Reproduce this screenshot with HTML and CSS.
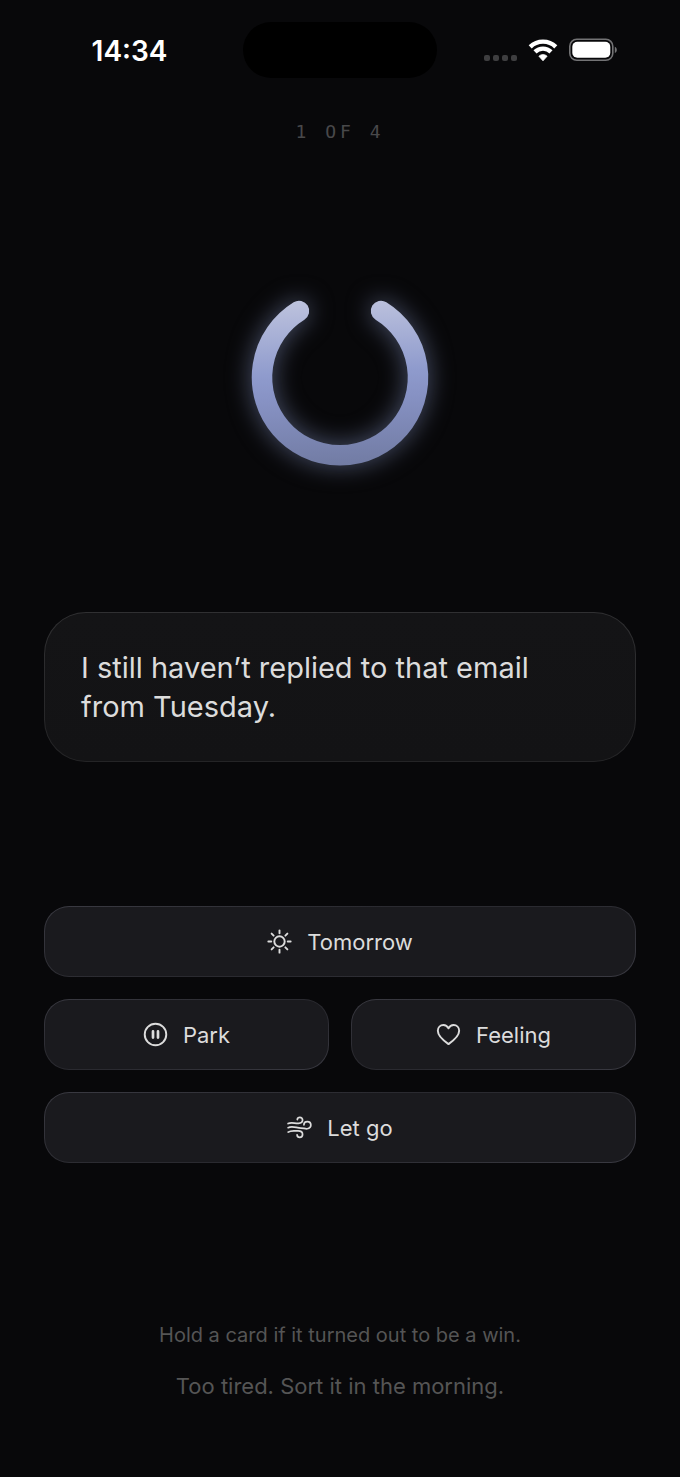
FILE: index.html
```html
<!DOCTYPE html>
<html lang="en">
<head>
  <meta charset="UTF-8">
  <meta name="viewport" content="width=device-width, initial-scale=1.0">
  <title>Sort</title>
  <link rel="stylesheet" href="styles.css">
</head>
<body>
  <header class="status">
    <time class="status-time">14:34</time>
    <div class="island"></div>
    <div class="status-icons">
      <div class="signal"><i></i><i></i><i></i><i></i></div>
      <svg class="wifi" width="30" height="24" viewBox="0 0 30 24">
        <g fill="none" stroke="#fff" stroke-width="4.400">
          <path d="M2.200 8.800A18.500 18.500 0 0 1 27.800 8.800"/>
          <path d="M7 13.900A11.500 11.500 0 0 1 23 13.900"/>
        </g>
        <path d="M15 22.800L10.900 18.200A6 6 0 0 1 19.100 18.200Z" fill="#fff" stroke="#fff" stroke-width="0.800" stroke-linejoin="round"/>
      </svg>
      <svg class="battery" width="48" height="24" viewBox="0 0 48 24">
        <rect x="0.800" y="1.300" width="43" height="21" rx="7" fill="none" stroke="#737375" stroke-width="1.600"/>
        <rect x="3.300" y="3.800" width="38" height="16" rx="5" fill="#fff"/>
        <path d="M45.800 8.800C48.500 9.800 48.500 14 45.800 15Z" fill="#737375"/>
      </svg>
    </div>
  </header>

  <main class="screen">
    <p class="counter">1 OF 4</p>

    <svg class="ring" viewBox="0 0 180 180">
      <defs>
        <linearGradient id="ringFill" gradientUnits="userSpaceOnUse" x1="76" y1="10" x2="84" y2="178">
          <stop offset="0" stop-color="#bfc4de"/>
          <stop offset="0.450" stop-color="#8f9bcd"/>
          <stop offset="0.600" stop-color="#8792c4"/>
          <stop offset="1" stop-color="#727ca4"/>
        </linearGradient>
      </defs>
      <path d="M49 24A78 78 0 1 0 131 24" fill="none" stroke="url(#ringFill)" stroke-width="20.500" stroke-linecap="round"/>
    </svg>

    <article class="card">
      <p>I still haven’t replied to that email from Tuesday.</p>
    </article>

    <div class="actions">
      <button class="action wide" type="button">
        <svg class="icon" viewBox="0 0 26 26">
          <circle cx="13" cy="13" r="5.400"/>
          <path d="M13 1.400V4.400M13 21.600V24.600M1.400 13H4.400M21.600 13H24.600M4.800 4.800L6.900 6.900M19.100 19.100L21.200 21.200M4.800 21.200L6.900 19.100M19.100 6.900L21.200 4.800"/>
        </svg>
        Tomorrow
      </button>
      <button class="action" type="button">
        <svg class="icon" viewBox="0 0 26 26">
          <circle cx="13" cy="13" r="11.200"/>
          <path d="M10.400 9.800V16.200M15.600 9.800V16.200" stroke-width="2.800"/>
        </svg>
        Park
      </button>
      <button class="action" type="button">
        <svg class="icon" viewBox="0 0 26 26">
          <path d="M13 23C7.200 19 1.900 14.500 1.900 9.200C1.900 5.700 4.500 3.200 7.700 3.200C10.100 3.200 11.900 4.500 13 6.600C14.100 4.500 15.900 3.200 18.300 3.200C21.500 3.200 24.100 5.700 24.100 9.200C24.100 14.500 18.800 19 13 23Z"/>
        </svg>
        Feeling
      </button>
      <button class="action wide" type="button">
        <svg class="icon" viewBox="0 0 26 26">
          <g stroke-width="1.800">
            <path d="M1.200 8.900C4.500 7.200 8 8.900 12 8.700C14.600 8.600 16.200 7.200 16.200 5.300C16.200 3.600 15 2.500 13.400 2.500C12 2.500 10.900 3.300 10.700 4.700"/>
            <path d="M1.200 13.200C5.500 11 10 13.600 14.500 13.600C17 13.600 19 14.500 21 14.300C23.300 14 24.800 12.500 24.800 10.500C24.800 8.300 23.200 6.800 21.100 6.800C19 6.800 17.600 8.200 17.600 10.200"/>
            <path d="M1.200 17.800C4.500 15.500 8 16.600 11.500 16.600C14.500 16.700 16.200 18 16.200 20C16.200 22 15 23.200 13.200 23.200C11.700 23.200 10.600 22.200 10.500 20.700"/>
          </g>
        </svg>
        Let go
      </button>
    </div>

    <footer class="footer">
      <p class="hint">Hold a card if it turned out to be a win.</p>
      <button class="skip" type="button">Too tired. Sort it in the morning.</button>
    </footer>
  </main>
</body>
</html>
```

FILE: styles.css
```css
* {
  box-sizing: border-box;
  margin: 0;
  padding: 0;
}
body {
  min-height: 100vh;
  display: flex;
  flex-direction: column;
  background-color: #08080a;
  color: #dcdcdc;
  font-family: 'Inter', sans-serif;
}

/* status bar */
.status {
  display: grid;
  grid-template-columns: 1fr auto 1fr;
  align-items: center;
  padding-top: 22px;
}
.status-time {
  justify-self: center;
  padding-top: 2px;
  padding-left: 16px;
  color: #fff;
  font-size: 28px;
  font-weight: 600;
}
.island {
  width: 194px;
  height: 56px;
  border-radius: 28px;
  background-color: #000;
}
.status-icons {
  display: flex;
  justify-content: flex-end;
  align-items: center;
  gap: 11px;
  padding-right: 63px;
}
.signal {
  display: flex;
  gap: 3px;
  padding-top: 15px;
}
.signal i {
  width: 6px;
  height: 6px;
  border-radius: 2px;
  background-color: #3e3e40;
}

.screen {
  flex: 1;
  display: flex;
  flex-direction: column;
  padding: 42px 44px 75px;
}
.counter {
  text-align: center;
  color: #48484a;
  font-family: 'DejaVu Sans Mono', monospace;
  font-size: 18px;
  line-height: 24px;
  letter-spacing: 4px;
}

.ring {
  align-self: center;
  width: 180px;
  margin-top: 143px;
  overflow: visible;
  filter: drop-shadow(0 0 12px rgba(143, 160, 210, 0.5));
}

.card {
  margin-top: 145px;
  padding: 35px 36px;
  border: 1px solid transparent;
  border-radius: 42px;
  background:
    linear-gradient(#141416, #131315) padding-box,
    linear-gradient(#303032, #242426) border-box;
  font-size: 29px;
  line-height: 39px;
}

/* answers */
.actions {
  display: grid;
  grid-template-columns: 1fr 1fr;
  gap: 22px;
  margin-top: 144px;
}
.action {
  display: flex;
  justify-content: center;
  align-items: center;
  gap: 15px;
  height: 71px;
  border: 1px solid transparent;
  border-radius: 25px;
  background:
    linear-gradient(#1a1a1e, #1a1a1e) padding-box,
    linear-gradient(165deg, #3a3a42, #2a2a30 40%, #2a2a30 60%, #3a3a42) border-box;
  color: #dcdcdc;
  font-family: inherit;
  font-size: 22px;
  cursor: pointer;
}
.wide {
  grid-column: 1 / -1;
}
.icon {
  width: 25px;
  height: 25px;
  fill: none;
  stroke: currentColor;
  stroke-width: 2;
  stroke-linecap: round;
  stroke-linejoin: round;
}

.footer {
  display: flex;
  flex-direction: column;
  align-items: center;
  gap: 22px;
  margin-top: auto;
  color: #555;
}
.hint {
  font-size: 20px;
  line-height: 26px;
}
.skip {
  border: none;
  background: none;
  color: inherit;
  font-family: inherit;
  font-size: 22px;
  line-height: 32px;
  cursor: pointer;
}
```
